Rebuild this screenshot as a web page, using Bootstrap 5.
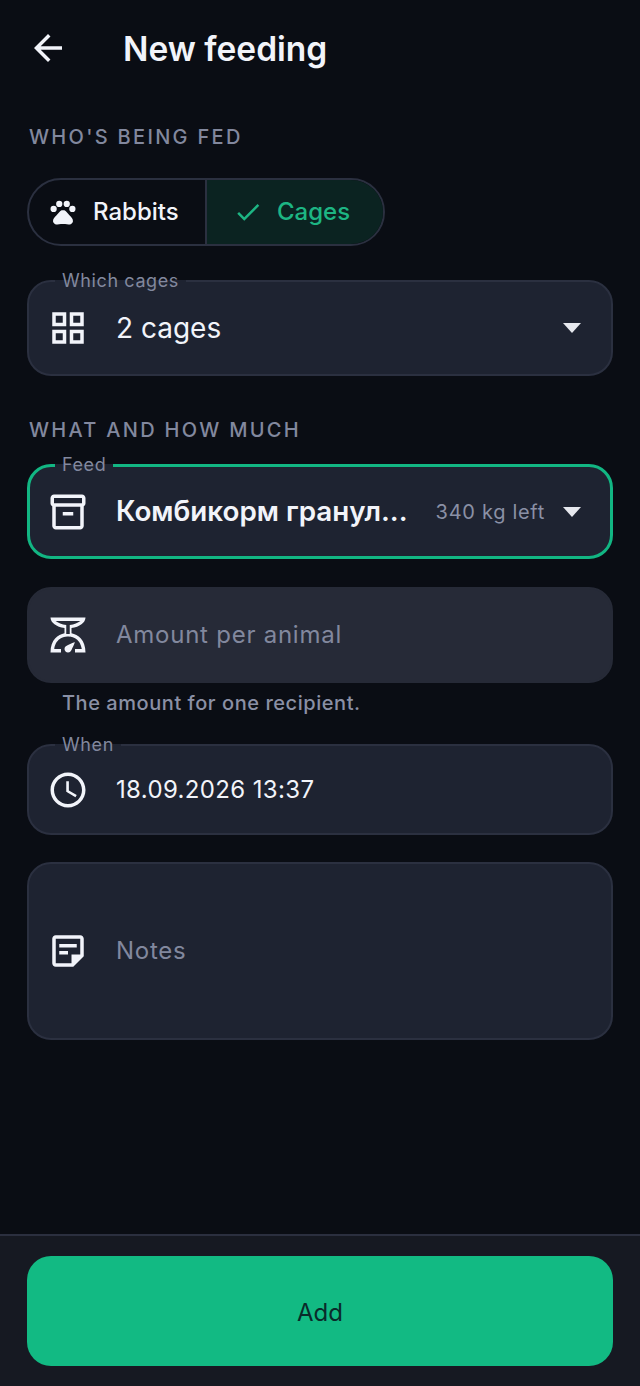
<!DOCTYPE html>
<html lang="en">
<head>
<meta charset="utf-8">
<meta name="viewport" content="width=device-width, initial-scale=1">
<link href="https://cdn.jsdelivr.net/npm/bootstrap@5.3.0/dist/css/bootstrap.min.css" rel="stylesheet">
<style>
html,body{height:100%}
body{background:#0a0d14;color:#f2f4fa;font-family:Inter,"Liberation Sans",sans-serif;width:640px;min-height:1386px;height:1386px;overflow:hidden}
.ico{fill:currentColor;flex:none;display:block}
.top-bar{height:96px;padding-left:27px}
.back-btn{background:none;border:0;padding:0;color:#f2f4fa;width:42px;height:42px}
.page-title{font-size:33.5px;font-weight:600;margin:0 0 0 54px;padding-top:3px;line-height:1}
.sec-label{font-size:20px;font-weight:500;letter-spacing:2.3px;color:#82889e;line-height:24px;margin:0;padding-left:2px}
.sec-one{margin-top:29px}
.seg-group{width:358px;height:68px;border:2px solid #2b3040;border-radius:34px;overflow:hidden;margin-top:29px}
.seg-item{font-size:24px;font-weight:500;line-height:1}
.seg-one{width:178px;padding-left:18.5px;gap:15.5px;color:#f2f4fa;border-right:2px solid #2b3040}
.seg-two{flex:1;background:#0b2321;color:#1db583;padding-left:26px;gap:14px}
.fld{position:relative;background:#1e2331;border:2px solid #2b3040;border-radius:24px;padding-left:18px;padding-right:30px}
.fld-label{position:absolute;left:26px;top:-12px;padding:0 7px;font-size:18px;line-height:22px;letter-spacing:.6px;color:#82889e;background:linear-gradient(#0a0d14 10px,#1e2331 10px)}
.fld-text{font-size:24px;margin-left:27px;line-height:1;white-space:nowrap}
.txt-big{font-size:28px}
.txt-date{letter-spacing:.36px}
.fld-hint{color:#82889e;letter-spacing:.75px}
.caret-down{width:0;height:0;border-left:9px solid transparent;border-right:9px solid transparent;border-top:10px solid #e6e8ee;flex:none}
.f-cages{height:96px;margin-top:34px}
.f-feed{height:95px;margin-top:22px;border:3px solid #12b683;padding-left:17px;padding-right:29px}
.f-feed .fld-label{top:-13px;left:25px}
.feed-name{font-size:27.8px;font-weight:600}
.feed-left{font-size:20px;color:#8a90a5;letter-spacing:.7px;white-space:nowrap;margin-right:18px}
.f-amount{height:96px;margin-top:28px;background:#262a37;border-color:#262a37}
.helper{font-size:20px;color:#8a90a5;margin:8px 0 0 35px;line-height:24px;letter-spacing:.55px;font-weight:500}
.f-when{height:91px;margin-top:29px}
.f-notes{height:178px;margin-top:27px}
.main-area{padding:0 27px}
.sec-two{margin-top:42px}
.bottom-bar{height:152px;background:#161922;border-top:2px solid #2b2f3f;padding:20px 27px}
.add-btn{height:110px;width:100%;background:#12ba83;border:0;border-radius:24px;color:#0a2a2a;font-size:24px;font-weight:400;padding-top:10px}
.add-btn:hover{background:#12ba83;color:#0a2a2a}
</style>
</head>
<body class="d-flex flex-column">
<header class="top-bar d-flex align-items-center">
  <button class="back-btn" type="button" aria-label="Back"><svg class="ico" width="42" height="42" viewBox="0 0 24 24"><path d="M20 11H7.83l5.59-5.59L12 4l-8 8 8 8 1.41-1.41L7.83 13H20v-2z"/></svg></button>
  <h1 class="page-title">New feeding</h1>
</header>
<main class="main-area flex-grow-1">
  <p class="sec-label sec-one">WHO'S BEING FED</p>
  <div class="seg-group d-flex">
    <div class="seg-item seg-one d-flex align-items-center">
      <svg class="ico" width="30" height="30" viewBox="0 0 24 24"><circle cx="4.5" cy="9.5" r="2.5"/><circle cx="9" cy="5.5" r="2.5"/><circle cx="15" cy="5.5" r="2.5"/><circle cx="19.5" cy="9.5" r="2.5"/><path d="M17.34 14.86c-.87-1.02-1.6-1.89-2.48-2.91-.46-.54-1.05-1.08-1.75-1.32-.11-.04-.22-.07-.33-.09-.25-.04-.52-.04-.78-.04s-.53 0-.79.05c-.11.02-.22.05-.33.09-.7.24-1.28.78-1.75 1.32-.87 1.02-1.6 1.89-2.48 2.91-1.31 1.31-2.92 2.76-2.62 4.79.29 1.02 1.02 2.03 2.33 2.32.73.15 3.06-.44 5.54-.44h.18c2.48 0 4.81.58 5.54.44 1.31-.29 2.04-1.31 2.33-2.32.31-2.04-1.3-3.49-2.61-4.8z"/></svg>
      <span>Rabbits</span>
    </div>
    <div class="seg-item seg-two d-flex align-items-center">
      <svg class="ico" width="30" height="30" viewBox="0 0 24 24"><path d="M9 16.17L4.83 12l-1.42 1.41L9 19 21 7l-1.41-1.41z"/></svg>
      <span>Cages</span>
    </div>
  </div>
  <div class="fld f-cages d-flex align-items-center">
    <span class="fld-label">Which cages</span>
    <svg class="ico" width="42" height="42" viewBox="0 0 24 24"><path d="M3 3v8h8V3H3zm6 6H5V5h4v4zm-6 4v8h8v-8H3zm6 6H5v-4h4v4zm4-16v8h8V3h-8zm6 6h-4V5h4v4zm-6 4v8h8v-8h-8zm6 6h-4v-4h4v4z"/></svg>
    <span class="fld-text txt-big flex-grow-1">2 cages</span>
    <span class="caret-down"></span>
  </div>
  <p class="sec-label sec-two">WHAT AND HOW MUCH</p>
  <div class="fld f-feed d-flex align-items-center">
    <span class="fld-label">Feed</span>
    <svg class="ico" width="42" height="42" viewBox="0 0 24 24"><path d="M20 2H4c-1 0-2 .9-2 2v3.01c0 .72.43 1.34 1 1.69V20c0 1.1 1.1 2 2 2h14c.9 0 2-.9 2-2V8.7c.57-.35 1-.97 1-1.69V4c0-1.1-1-2-2-2zm-1 18H5V9h14v11zm1-13H4V4h16v3z"/><path d="M9 12h6v2H9z"/></svg>
    <span class="fld-text feed-name flex-grow-1">Комбикорм гранул...</span>
    <span class="feed-left">340 kg left</span>
    <span class="caret-down"></span>
  </div>
  <div class="fld f-amount d-flex align-items-center">
    <svg class="ico" width="42" height="42" viewBox="0 0 24 24"><path fill-rule="evenodd" d="M14 11V8c4.56-.58 8-3.1 8-6H2c0 2.9 3.44 5.42 8 6v3c-3.68.73-8 3.61-8 11h6v-2H4.13c.93-6.83 6.65-7.2 7.87-7.2s6.94.37 7.87 7.2H16v2h6c0-7.39-4.32-10.27-8-11zm-2 11c-1.1 0-2-.9-2-2 0-.55.22-1.05.59-1.41C11.39 17.79 16 16 16 16s-1.79 4.61-2.59 5.41c-.36.37-.86.59-1.41.59zM4.9 4h14.2C17.7 5.1 15.5 6 13 6.3V11.4h-2V6.3C8.5 6 6.3 5.1 4.9 4z"/></svg>
    <span class="fld-text fld-hint">Amount per animal</span>
  </div>
  <p class="helper">The amount for one recipient.</p>
  <div class="fld f-when d-flex align-items-center">
    <span class="fld-label">When</span>
    <svg class="ico" width="42" height="42" viewBox="0 0 24 24"><path d="M11.99 2C6.47 2 2 6.48 2 12s4.47 10 9.99 10C17.52 22 22 17.52 22 12S17.52 2 11.99 2zM12 20c-4.42 0-8-3.58-8-8s3.58-8 8-8 8 3.58 8 8-3.58 8-8 8zm.5-13H11v6l5.25 3.15.75-1.23-4.5-2.67z"/></svg>
    <span class="fld-text txt-date">18.09.2026 13:37</span>
  </div>
  <div class="fld f-notes d-flex align-items-center">
    <svg class="ico" width="42" height="42" viewBox="0 0 24 24"><path d="M19 5v9h-5v5H5V5h14m0-2H5c-1.1 0-2 .9-2 2v14c0 1.1.9 2 2 2h10l6-6V5c0-1.1-.9-2-2-2zm-7 11H7v-2h5v2zm5-4H7V8h10v2z"/></svg>
    <span class="fld-text fld-hint">Notes</span>
  </div>
</main>
<footer class="bottom-bar">
  <button class="add-btn btn" type="button">Add</button>
</footer>
<script src="https://cdn.jsdelivr.net/npm/bootstrap@5.3.0/dist/js/bootstrap.bundle.min.js"></script>
</body>
</html>
